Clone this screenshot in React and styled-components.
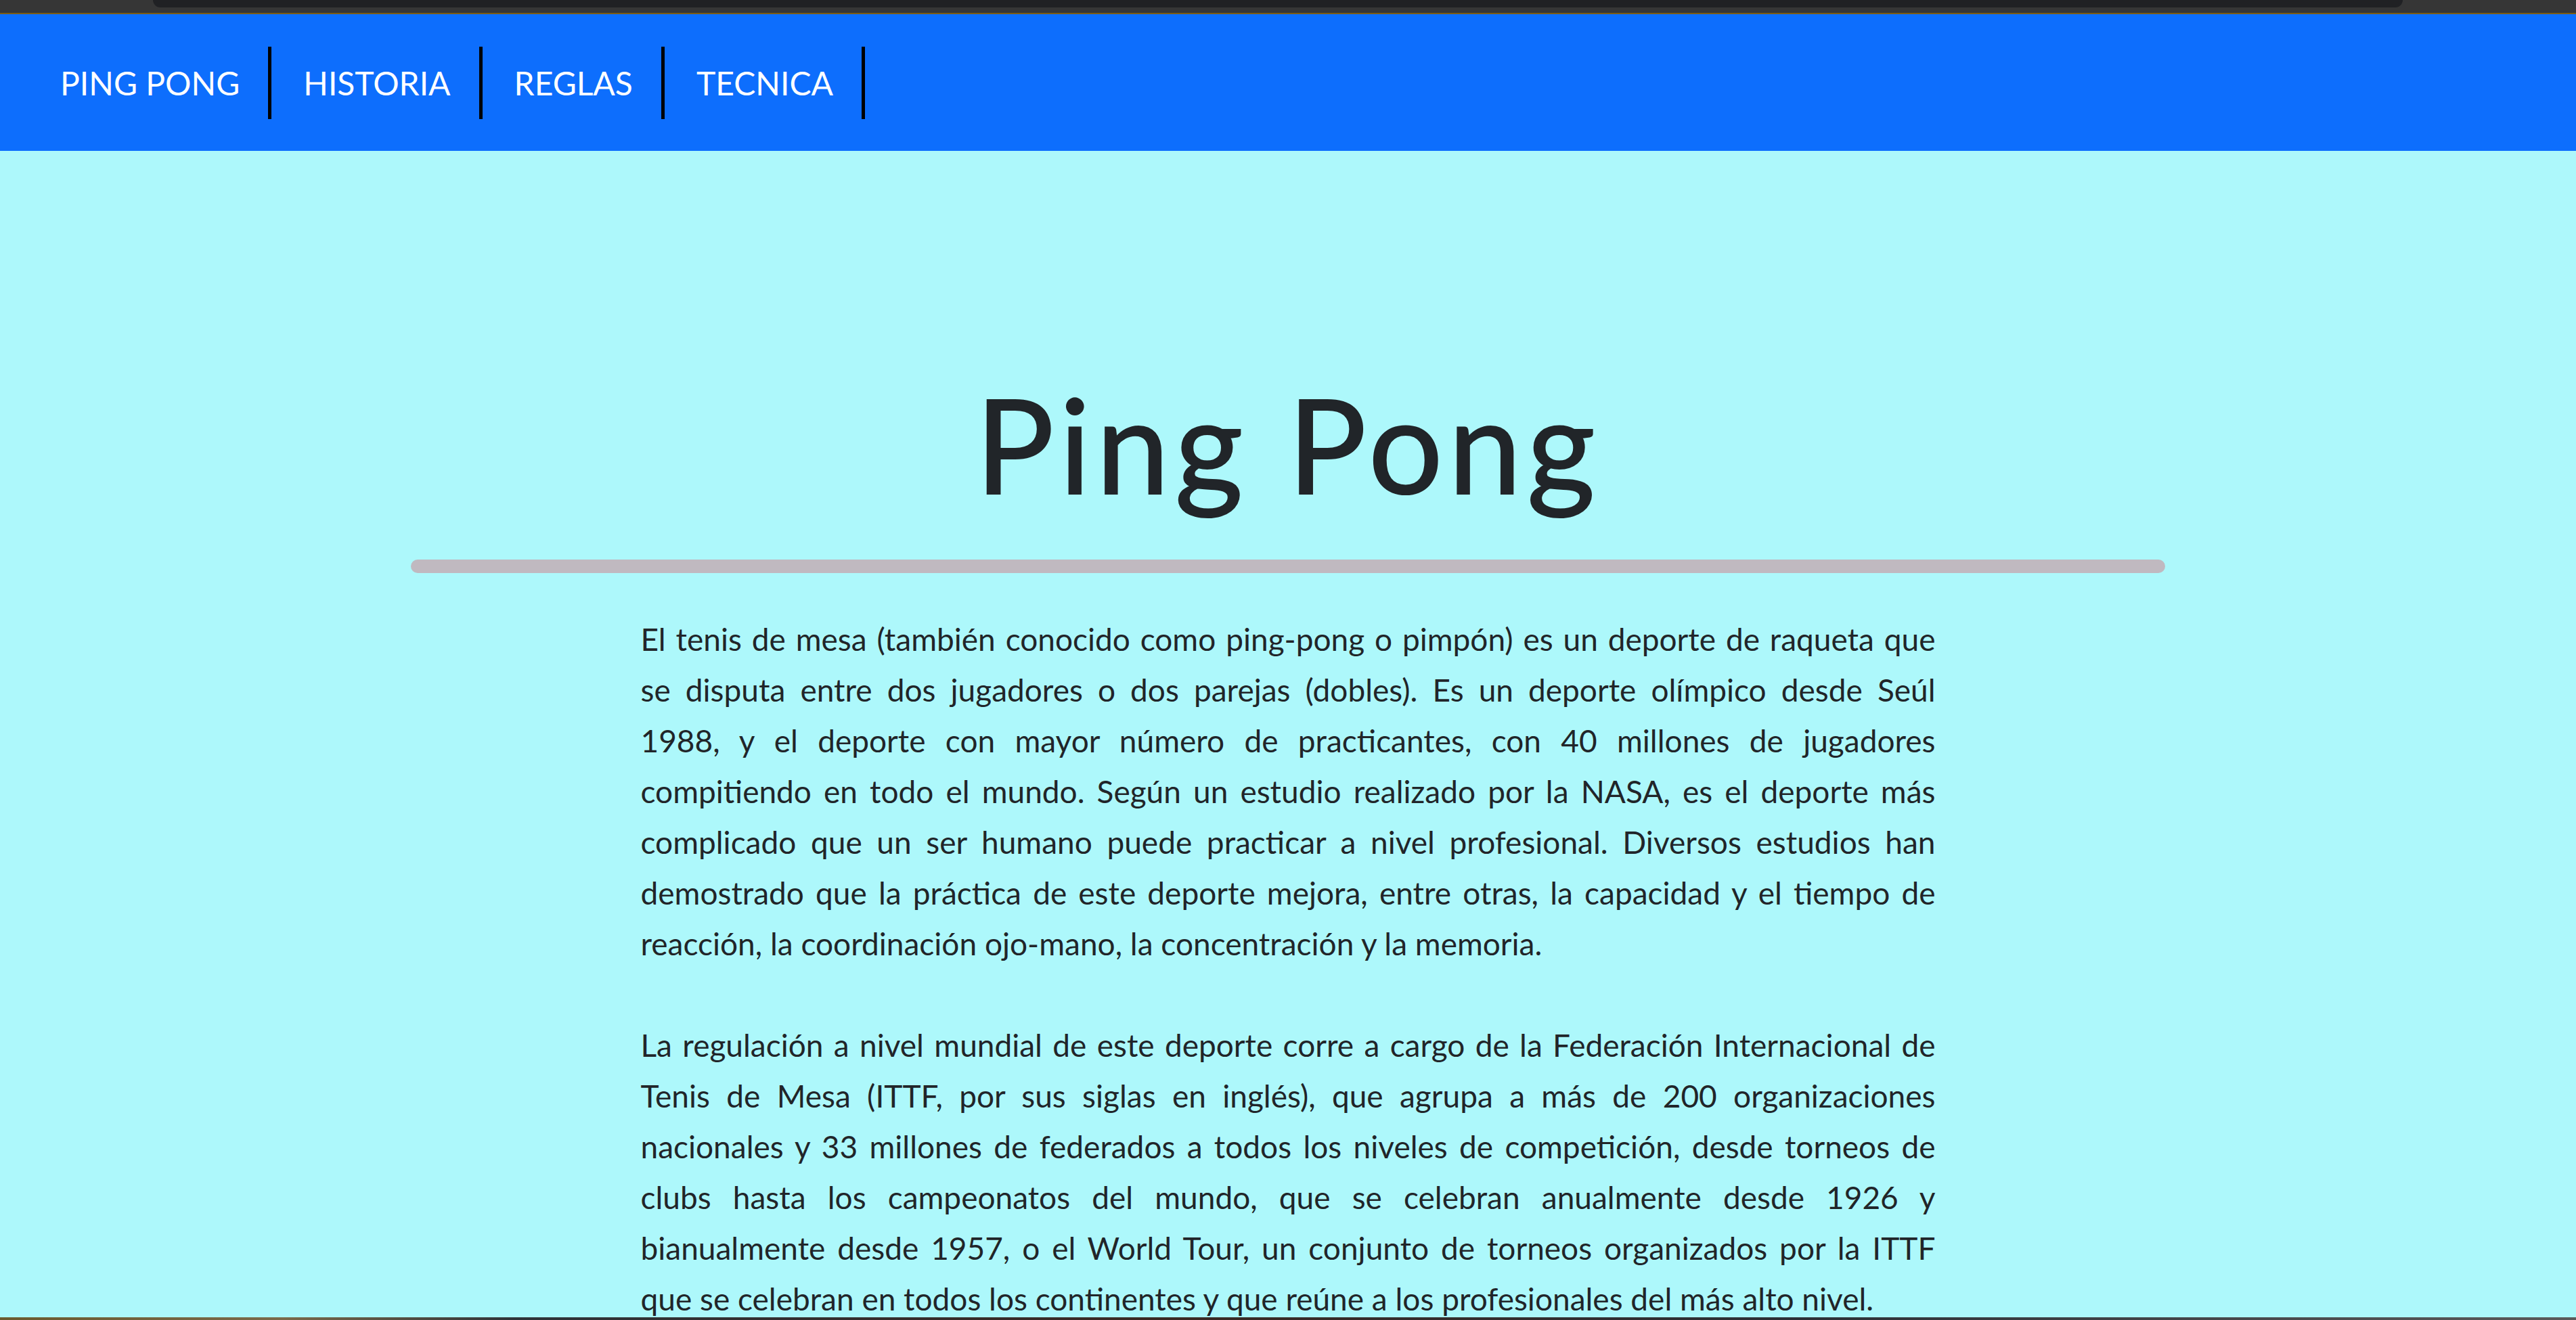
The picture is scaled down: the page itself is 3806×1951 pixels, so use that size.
import React from 'react'
import styled, { createGlobalStyle } from 'styled-components'

const GlobalStyle = createGlobalStyle`
  html, body {
    margin: 0;
    padding: 0;
    background: #adf8fb;
  }
  body {
    font-family: Lato, "Open Sans", sans-serif;
    color: #212529;
  }
`

const links = ['PING PONG', 'HISTORIA', 'REGLAS', 'TECNICA']

const paragraphs = [
  'El tenis de mesa (también conocido como ping-pong o pimpón) es un deporte de raqueta que se disputa entre dos jugadores o dos parejas (dobles). Es un deporte olímpico desde Seúl 1988,\u00a0y el deporte con mayor número de practicantes, con 40 millones de jugadores compitiendo en todo el mundo. Según un estudio realizado por la NASA, es el deporte más complicado que un ser humano puede practicar a nivel profesional. Diversos estudios han demostrado que la práctica de este deporte mejora, entre otras, la capacidad y el tiempo de reacción, la coordinación ojo-mano, la concentración y la memoria.',
  'La regulación a nivel mundial de este deporte corre a cargo de la Federación Internacional de Tenis de Mesa (ITTF, por sus siglas en inglés), que agrupa a más de 200 organizaciones nacionales y 33 millones de federados a todos los niveles de competición, desde torneos de clubs hasta los campeonatos del mundo, que se celebran anualmente desde 1926 y bianualmente desde 1957, o el World Tour, un conjunto de torneos organizados por la ITTF que se celebran en todos los continentes y que reúne a los profesionales del más alto nivel.',
]

const App = () => {
  return (
    <>
      <GlobalStyle />
      <Chrome>
        <Tab />
      </Chrome>
      <Nav>
        {links.map((l) => (
          <NavItem key={l} href="#">{l}</NavItem>
        ))}
      </Nav>
      <Main>
        <Title>Ping Pong</Title>
        <Rule />
        <Text>
          {paragraphs.map((p, i) => (
            <P key={i}>{p}</P>
          ))}
        </Text>
      </Main>
      <Taskbar />
    </>
  )
}

const Chrome = styled.div`
  height: 21px;
  background: #363636;
  border-bottom: 2px solid #7a5c14;
  box-sizing: border-box;
  display: flex;
  padding: 0 256px 0 226px;
`
const Tab = styled.div`
  flex: 1;
  height: 11px;
  background: #202124;
  border-radius: 0 0 12px 12px;
`
const Nav = styled.nav`
  height: 202px;
  background: #0d6efd;
  display: flex;
  align-items: center;
  padding-left: 42px;
`
const NavItem = styled.a`
  height: 107px;
  display: flex;
  align-items: center;
  padding: 0 42px 0 47px;
  border-right: 5px solid #000;
  color: #fff;
  text-decoration: none;
  font-size: 48px;
  font-family: Lato, sans-serif;
`
const Main = styled.main`
  display: flex;
  flex-direction: column;
  align-items: center;
  padding-top: 316px;
`
const Title = styled.h1`
  margin: 0;
  font-family: Lato, sans-serif;
  font-weight: 400;
  font-size: 194px;
  line-height: 1.2;
  letter-spacing: 8px;
  color: #212529;
  -webkit-text-stroke: 2px #212529;
`
const Rule = styled.div`
  width: 2592px;
  height: 20px;
  border-radius: 10px;
  background: #c0b9c0;
  margin: 55px 0 60px;
`
const Text = styled.div`
  width: 1913px;
`
const P = styled.p`
  margin: 0 0 75px;
  font-size: 46px;
  line-height: 75px;
  text-align: justify;
  color: #212529;
`
const Taskbar = styled.div`
  position: fixed;
  left: 0;
  right: 0;
  bottom: 0;
  height: 4px;
  background: linear-gradient(90deg, #6a5a2e 0%, #7a6a4a 11%, #2e3338 20%, #3a2a24 45%, #2c3036 70%, #5a5a5a 100%);
`

export default App
